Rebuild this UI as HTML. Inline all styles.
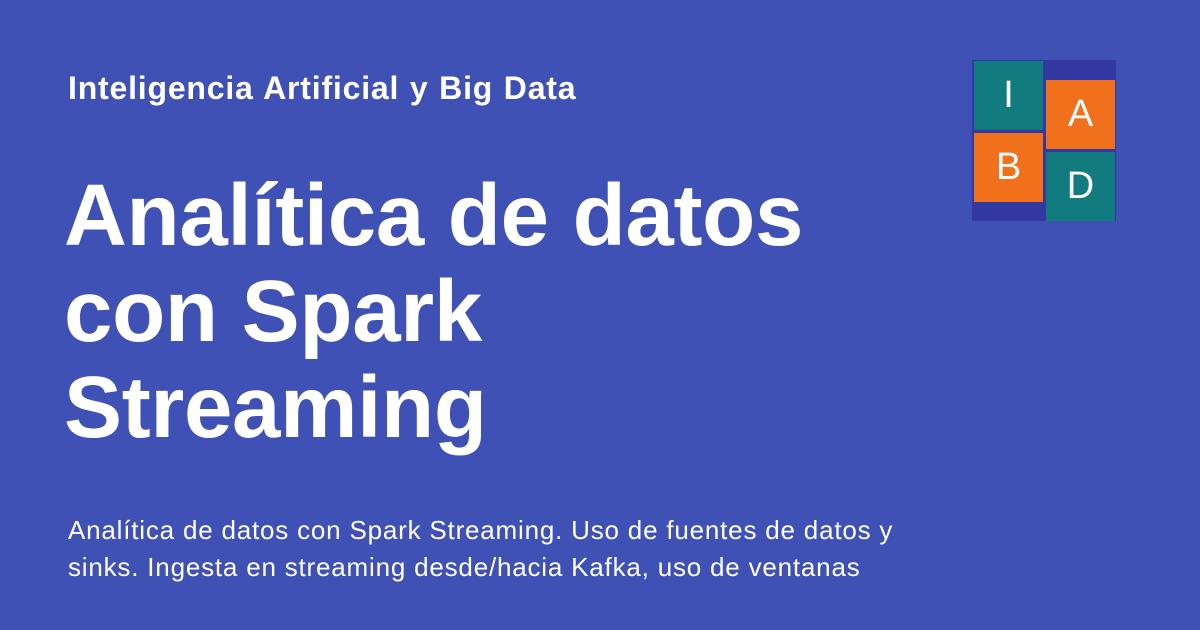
<!DOCTYPE html>
<html><head><style>
body{margin:0;width:1200px;height:630px;background:#3f51b5;font-family:"Liberation Sans",sans-serif;color:#fff;position:relative;overflow:hidden}
.s{position:absolute;left:68px;top:70px;font-size:32px;font-weight:bold;letter-spacing:0.8px;word-spacing:1px}
.t{position:absolute;left:64px;top:168px;font-size:87px;font-weight:bold;line-height:96px;letter-spacing:-0.3px}
.d{position:absolute;left:68px;top:512px;font-size:26px;line-height:37px;letter-spacing:0.8px}
.logo{position:absolute;left:972px;top:60px;width:144px;height:161px;background:#3438a3}
.tile{position:absolute;width:69px;height:69px;font-size:38px;display:flex;align-items:center;justify-content:center;font-weight:normal}
.g{background:#127b80}.o{background:#f0701c}
</style></head><body>
<div class="s">Inteligencia Artificial y Big Data</div>
<div class="t">Analítica de datos<br>con Spark<br>Streaming</div>
<div class="d">Analítica de datos con Spark Streaming. Uso de fuentes de datos y<br>sinks. Ingesta en streaming desde/hacia Kafka, uso de ventanas</div>
<div class="logo">
<div class="tile g" style="left:2px;top:1px">I</div>
<div class="tile o" style="left:74px;top:20px">A</div>
<div class="tile o" style="left:2px;top:73px">B</div>
<div class="tile g" style="left:74px;top:92px">D</div>
</div>
</body></html>
